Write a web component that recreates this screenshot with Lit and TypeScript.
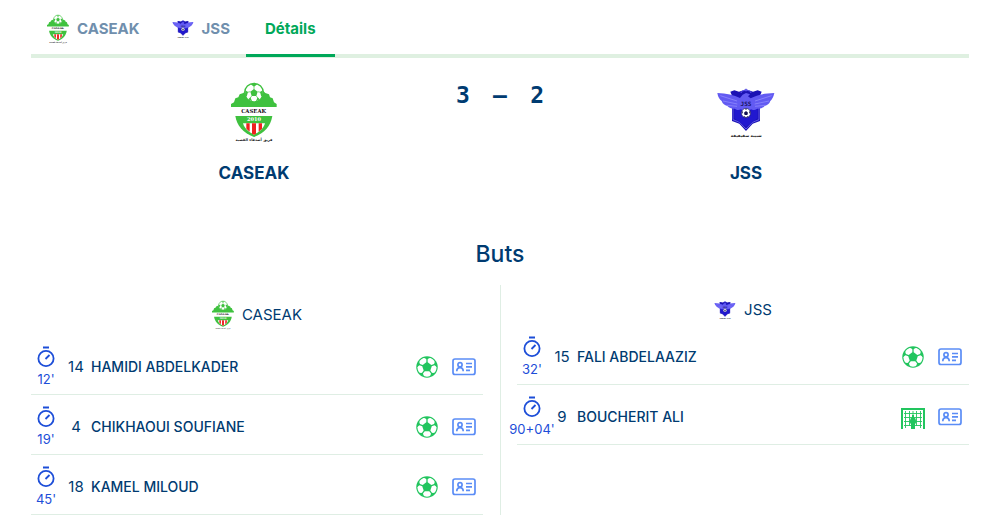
import { LitElement, html, css, svg } from "lit";
import { customElement, property } from "lit/decorators.js";

type Goal = { minute: string; number: number; player: string; penalty?: boolean };

const panel = "M-4.5 -8.5 L4.5 -8.5 L8 -13 Q7.500 -17 5 -18.500 Q0 -20 -5 -18.500 Q-7.500 -17 -8 -13 Z";

@customElement("club-crest")
class ClubCrest extends LitElement {
  @property() club = "";
  @property({ type: Boolean }) small = false;
  static styles = css`
    :host { display: block; flex: none; }
    svg { display: block; width: 100%; height: 100%; }
  `;
  render() {
    return this.club === "CASEAK"
      ? html`<svg viewBox=${this.small ? "48 18 138 188" : "21 18 192 192"} role="img" aria-label="CASEAK">
          <path fill="#3fc13f" d="M48 96V87l9-5 4-12 9-3 4-9 11-4 8-9h49l9 9 11 4 3 9 8 3 4 12 8 5v9z"/>
          <circle cx="117" cy="53" r="28" fill="#fff" stroke="#3fc13f" stroke-width="4"/>
          <path fill="#3fc13f" d="M117 42l11 8-4 13h-14l-4-13zM106 27h22l-11 8zM91 46l8 5-4 14-5-4zM143 46l-8 5 4 14 5-4zM100 73l6-6 6 13zM134 73l-6-6-6 13z"/>
          <path stroke="#3fc13f" stroke-width="2" d="M117 34v10M106 50l-9 2M128 50l9 2M110 63l-5 7M124 63l5 7"/>
          <text x="116" y="114" text-anchor="middle" font-family="DejaVu Serif, serif" font-size="16" font-weight="700" fill="#181018">CASEAK</text>
          <path fill="#3fc13f" d="M61 123h111c-5 29-21 50-55 63-34-13-51-34-56-63z"/>
          <path fill="#fff" d="M84 145h66c-5 16-17 26-33 34-16-8-28-18-33-34z"/>
          <path fill="#ef2020" d="M94 145h10v25l-10-9zM111 145h12v31l-6 3-6-3zM131 145h10v16l-10 9z"/>
          <text x="117" y="139" text-anchor="middle" font-family="DejaVu Serif, serif" font-size="15" font-weight="700" fill="#fff">2010</text>
          <text x="117" y="198" text-anchor="middle" font-family="DejaVu Sans, sans-serif" font-size="11" fill="#222">فريق أصدقاء القصبة</text>
        </svg>`
      : html`<svg viewBox=${this.small ? "33 30 180 164" : "27 18 192 192"} role="img" aria-label="JSS">
          <path fill="#1b12b4" d="M76 50l12-4 14 4 21-7 21 7 14-4 12 4-5 12v76l-22 8-20 22-20-22-22-8V62z"/>
          <path fill="none" stroke="#8580ff" stroke-width="2" d="M84 96v38l20 8 19 20 19-20 20-8V96"/>
          <path fill="#2118cf" d="M88 98h70v32l-35 25-35-25z"/>
          <path fill="#625af2" d="M37 54c28 1 50 6 68 15l8-10 10-5 12 4-6 6 8 6c18-10 38-15 71-16-3 13-7 20-12 24-3 9-9 13-17 15-7 7-14 9-22 8-8 5-14 5-19 2l-15 10-15-10c-6 3-12 3-19-2-8 1-15-1-22-8-8-2-14-6-17-15-6-4-11-11-13-24z"/>
          <path stroke="#9993ff" stroke-width="2" fill="none" d="M46 62l50 16M54 78l43 9M66 91l30 3M200 62l-50 16M192 78l-43 9M180 91l-30 3"/>
          <path stroke="#625af2" stroke-width="3" fill="none" d="M108 54c0-11 30-11 30 0M123 41v8"/>
          <text x="123" y="94" text-anchor="middle" font-family="DejaVu Sans Mono, monospace" font-size="18" font-weight="700" fill="#17135e">JSS</text>
          <circle cx="123" cy="114" r="14" fill="#fff" stroke="#17135e" stroke-width="2"/>
          <path fill="#151454" d="M123 108l6 5-2 7h-8l-2-7zM110 108l4 2-2 7zM136 108l-4 2 2 7zM115 124h5l2 4zM131 124h-5l-2 4zM118 101h10l-5 3z"/>
          <text x="124" y="186" text-anchor="middle" font-family="DejaVu Sans, sans-serif" font-size="12" font-weight="700" fill="#111">شبيبة سقيفيفة</text>
        </svg>`;
  }
}

@customElement("goal-row")
class GoalRow extends LitElement {
  @property({ attribute: false }) goal!: Goal;
  static styles = css`
    :host { display: flex; height: 55px; padding-top: 4px; align-items: center; border-bottom: 1px solid #dfeee4; }
    svg { display: block; flex: none; }
    .time { width: 30px; display: flex; flex-direction: column; align-items: center; color: #1d4ed8; font-size: 13px; line-height: 20px; white-space: nowrap; }
    .time svg { width: 24px; height: 24px; }
    .number { width: 30px; text-align: center; flex: none; }
    .player { flex: 1; font-size: 14px; font-weight: 500; }
    .icons { display: flex; align-items: center; gap: 11px; padding-right: 6px; }
    .kind, .card { width: 26px; height: 26px; }
    a { display: block; }
  `;
  render() {
    const g = this.goal;
    return html`
      <div class="time">
        <svg viewBox="0 0 24 24" fill="none" stroke="#1d4ed8" stroke-width="1.800"><circle cx="12" cy="13.500" r="7.600"/><path d="M9 2.500h6M11.500 14l4-4"/></svg>
        <span>${g.minute}'</span>
      </div>
      <span class="number">${g.number}</span>
      <span class="player">${g.player}</span>
      <div class="icons">
        ${g.penalty
          ? html`<svg class="kind" viewBox="0 0 26 26" role="img" aria-label="Penalty"><path fill="none" stroke="#22c55e" stroke-width="2" d="M2 25V5h22v20"/><path fill="none" stroke="#22c55e" stroke-width=".9" d="M5.500 7v17M9.500 7v15M13 7v5M16.500 7v15M20.500 7v17M4 9.500h18M4 13.500h18M4 17.500h18M4 21.500h18"/><path fill="#22c55e" d="M12 11h2v2.500l1.500 1 .8 3.500-1.300 2.500V25h-4v-4.500L9.700 18l.8-3.500 1.500-1z"/></svg>`
          : html`<svg class="kind" viewBox="-26 -26 52 52" role="img" aria-label="But"><circle r="21.500" fill="#22c55e"/>${[36, 108, 180, 252, 324].map((a) => svg`<path fill="#fff" transform="rotate(${a})" d=${panel}/>`)}</svg>`}
        <a href="#licence" aria-label="Licence">
          <svg class="card" viewBox="0 0 26 26" fill="none" stroke="#5b8df6" stroke-width="1.700"><rect x="2" y="5" width="22" height="15.500" rx="2"/><circle cx="9" cy="10.700" r="2.100"/><path d="M5.800 17.300c0-5 6.400-5 6.400 0M15 9.500h6M15 12.900h6M15 16.300h4"/></svg>
        </a>
      </div>`;
  }
}

@customElement("app-root")
class AppRoot extends LitElement {
  goals: Record<string, Goal[]> = {
    CASEAK: [
      { minute: "12", number: 14, player: "HAMIDI ABDELKADER" },
      { minute: "19", number: 4, player: "CHIKHAOUI SOUFIANE" },
      { minute: "45", number: 18, player: "KAMEL MILOUD" },
    ],
    JSS: [
      { minute: "32", number: 15, player: "FALI ABDELAAZIZ" },
      { minute: "90+04", number: 9, player: "BOUCHERIT ALI", penalty: true },
    ],
  };
  static styles = css`
    :host { display: block; padding: 0 31px; color: #003b71; font-family: Inter, sans-serif; font-size: 15px; font-weight: 400; line-height: 24px; background: #fff; }
    .tabs { display: flex; height: 54px; border-bottom: 4px solid #dff0e1; }
    .tab { display: flex; align-items: center; gap: 8px; height: 57px; padding: 3px 16px 0; border: 0; border-bottom: 3px solid transparent; background: none; color: #708fad; font: inherit; font-weight: 700; }
    .tab.active { color: #00a859; border-color: #00a859; padding: 3px 19px 0; }
    .tall { width: 22px; height: 30px; }
    .short { width: 22px; height: 20px; }
    .match { display: grid; grid-template-columns: 1fr 46px 1fr; padding-top: 23px; }
    .team { display: flex; flex-direction: column; align-items: center; gap: 16px; font-size: 17px; font-weight: 700; }
    .crest { width: 64px; height: 64px; }
    .score { display: flex; justify-content: space-between; margin: 0 -21px; font: 700 23px/28px "DejaVu Sans Mono", monospace; }
    h2 { margin: 53px 0 15px; text-align: center; font-size: 23px; line-height: 32px; font-weight: 500; }
    .columns { display: grid; grid-template-columns: 1fr 1fr; }
    .column:first-child { padding: 15px 17px 0 0; }
    .column + .column { padding: 15px 0 0 16px; border-left: 1px solid #dfeee4; }
    .heading { display: flex; align-items: center; justify-content: center; gap: 8px; margin: 0 0 5px; font-size: 15px; line-height: 20px; font-weight: 400; }
  `;
  column(club: string) {
    return html`<section class="column">
      <h3 class="heading"><club-crest class=${club === "CASEAK" ? "tall" : "short"} small .club=${club}></club-crest>${club}</h3>
      ${this.goals[club].map((goal) => html`<goal-row .goal=${goal}></goal-row>`)}
    </section>`;
  }
  render() {
    return html`
      <nav class="tabs" role="tablist">
        <button class="tab" role="tab"><club-crest class="tall" small .club=${"CASEAK"}></club-crest>CASEAK</button>
        <button class="tab" role="tab"><club-crest class="short" small .club=${"JSS"}></club-crest>JSS</button>
        <button class="tab active" role="tab" aria-selected="true">Détails</button>
      </nav>
      <header class="match">
        <div class="team"><club-crest class="crest" .club=${"CASEAK"}></club-crest>CASEAK</div>
        <div class="score"><span>3</span><span>—</span><span>2</span></div>
        <div class="team"><club-crest class="crest" .club=${"JSS"}></club-crest>JSS</div>
      </header>
      <h2>Buts</h2>
      <div class="columns">${this.column("CASEAK")}${this.column("JSS")}</div>`;
  }
}
